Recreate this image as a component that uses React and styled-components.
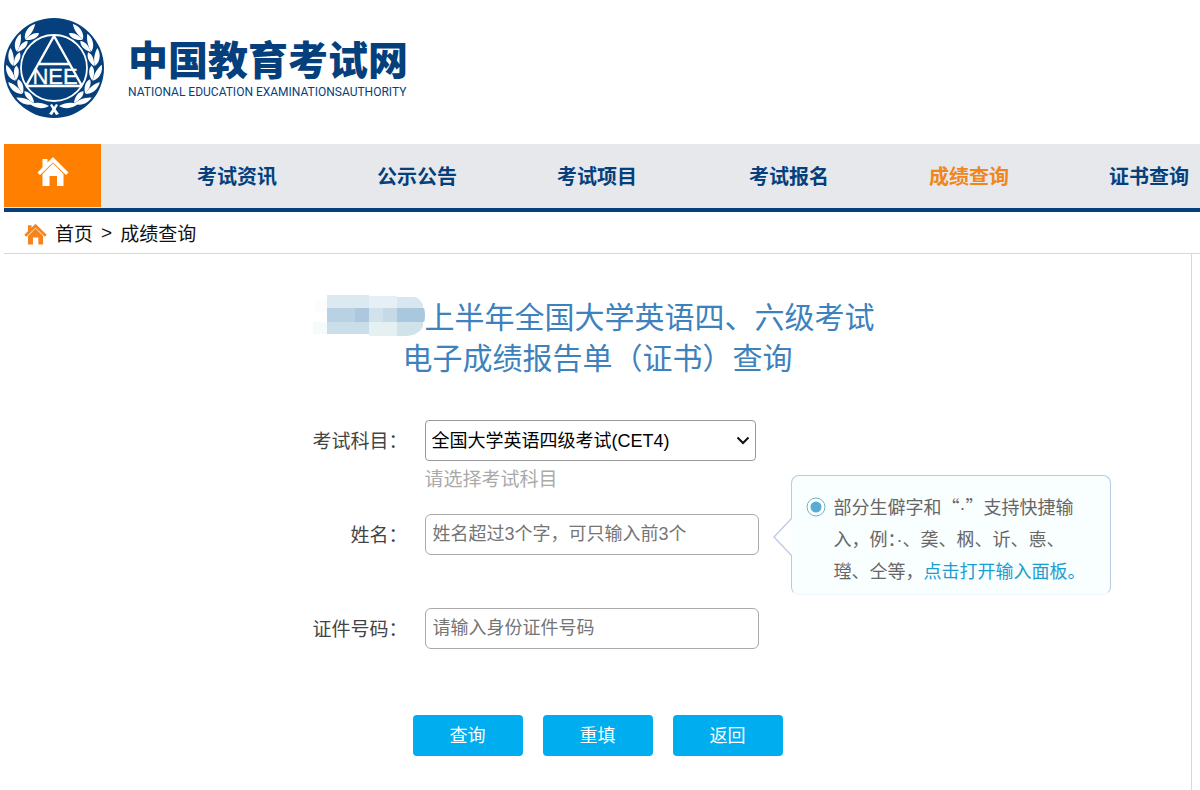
import React, { useState } from 'react';
import styled, { createGlobalStyle } from 'styled-components';

const GlobalStyle = createGlobalStyle`
  * {
    box-sizing: border-box;
  }
  body {
    margin: 0;
    background: #fff;
    color: #444;
    font-family: "Liberation Sans", "Noto Sans CJK SC", sans-serif;
    overflow-x: hidden;
  }
`;

const Page = styled.div`
  padding-left: 4px;
`;

// header
const Header = styled.header`
  display: flex;
  align-items: flex-start;
  gap: 24px;
  height: 144px;
  padding-top: 18px;
`;

const Brand = styled.div`
  display: flex;
  flex-direction: column;
  padding-top: 17px;
  color: #053f7c;
`;

const BrandName = styled.h1`
  margin: 0;
  font-size: 40px;
  line-height: 46px;
  font-weight: 900;
  font-family: "Noto Sans CJK SC", sans-serif;
  white-space: nowrap;
`;

const BrandSub = styled.span`
  font-family: Roboto, "Liberation Sans", sans-serif;
  font-size: 12px;
  line-height: 22px;
  white-space: nowrap;
`;

// navigation
const Nav = styled.nav`
  display: flex;
  height: 68px;
  background: #e6e8ec;
  border-bottom: 4px solid #053f7c;
  overflow: hidden;
`;

const HomeLink = styled.a`
  display: flex;
  flex: none;
  justify-content: center;
  width: 97px;
  height: 63px;
  padding-top: 12px;
  background: #ff8000;
  color: #fff;
`;

const NavGroup = styled.div`
  display: flex;
  flex: none;
  gap: 100px;
  padding-left: ${(props) => props.$space}px;
`;

const NavItem = styled.a`
  flex: none;
  color: ${(props) => (props.$active ? '#f08519' : '#053f7c')};
  font-size: 20px;
  font-weight: 700;
  line-height: 66px;
  text-decoration: none;
`;

const Crumbs = styled.div`
  display: flex;
  align-items: center;
  gap: 8px;
  height: 42px;
  padding-left: 20px;
  border-bottom: 1px solid #d8d8d8;
  color: #111;
  font-size: 19px;

  a {
    color: inherit;
    text-decoration: none;
  }
`;

const CrumbHome = styled.span`
  display: flex;
  padding-top: 4px;
  color: #f5841f;
`;

// content
const Content = styled.main`
  min-height: 536px;
  margin-right: 8px;
  padding-top: 43px;
  border-right: 1px solid #d8d8d8;
`;

const Title = styled.h2`
  margin: 0 0 41px;
  color: #3d81bd;
  font-size: 30px;
  font-weight: 400;
  line-height: 41px;
  text-align: center;
`;

const Mosaic = styled.svg`
  width: 112px;
  height: 41px;
  margin: -2px 0 0 -8px;
  vertical-align: top;
`;

const Fields = styled.div`
  display: grid;
  grid-template-columns: 34% 334px 320px;
  grid-auto-rows: minmax(94px, auto);
  column-gap: 17px;
`;

const Label = styled.label`
  grid-column: 1;
  font-size: 19px;
  line-height: 43px;
  text-align: right;
`;

const Control = styled.div`
  grid-column: 2;
  position: relative;
`;

const Select = styled.select`
  display: block;
  width: 331px;
  height: 41px;
  padding: 0 6px;
  border: 1px solid #999;
  border-radius: 4px;
  background: #fff;
  color: #000;
  font-family: inherit;
  font-size: 18px;
  appearance: none;
`;

const Chevron = styled.svg`
  position: absolute;
  top: 15px;
  right: 9px;
  pointer-events: none;
`;

const Hint = styled.div`
  color: #aaa;
  font-size: 19px;
  line-height: 38px;
`;

const Input = styled.input`
  display: block;
  width: 100%;
  height: 41px;
  padding: 0 7px;
  border: 1px solid #aaa;
  border-radius: 6px;
  background: #fff;
  color: #333;
  font-family: inherit;
  font-size: 18px;

  &::placeholder {
    color: #757575;
  }
`;

const Tip = styled.aside`
  position: relative;
  display: flex;
  grid-column: 3;
  grid-row: 1 / 4;
  align-self: start;
  gap: 8px;
  height: 120px;
  margin: 55px 0 0 15px;
  width: 320px;
  padding: 14px 12px 0 14px;
  border: 1px solid #b7cbe2;
  border-bottom-color: #f0f7fa;
  border-radius: 8px;
  background: #f9feff;
  color: #666;
  font-family: "Noto Sans CJK SC", sans-serif;
  font-size: 18px;
  line-height: 32px;

  p {
    flex: 1;
    margin: 0;
  }
  a {
    color: #1b9dd0;
    text-decoration: none;
  }
`;

// the middle dot is full width in the CJK font
const Dot = styled.span`
  font-family: "Liberation Sans", sans-serif;
  line-height: 1;
`;

const TipArrow = styled.svg`
  position: absolute;
  top: 41px;
  left: -20px;
`;

const TipDot = styled.svg`
  flex: none;
  margin-top: 7px;
`;

const Buttons = styled.div`
  display: flex;
  justify-content: center;
  gap: 20px;
  padding-top: 13px;
`;

const Button = styled.button`
  width: 110px;
  height: 41px;
  padding: 0 0 3px;
  border: 0;
  border-radius: 4px;
  background: #00adef;
  color: #fff;
  font-family: inherit;
  font-size: 18px;
`;

const leaves = [28, 49, 70, 91, 112, 133];

const Emblem = () => (
  <svg width="100" height="101" viewBox="0 0 100 101" role="img" aria-label="NEEA">
    <circle cx="50" cy="50" r="50" fill="#053f7c" />
    <circle cx="50" cy="50" r="33" fill="none" stroke="#fff" strokeWidth="1.8" />
    {/* laurel, one side is the mirror of the other */}
    {[1, -1].map((side) => (
      <g key={side} transform={`translate(50 50) scale(${side} 1)`} fill="#fff">
        {leaves.map((a) => (
          <g key={a} transform={`rotate(${a + 6}) translate(0 -41)`}>
            <path d="M8 1C3 1 -4 -1 -9 -6C-3 -8 5 -6 8 1Z" />
            <path d="M8 1.500C3 6 -3 7 -7 4C-4 0 2 0 8 1.500Z" />
          </g>
        ))}
        <path d="M5 38C12 34 18 34 24 36C19 40 12 42 5 38Z" />
        <path d="M-5 46L2 36L4 37L-2 47Z" />
      </g>
    ))}
    <path d="M50 18L22 68M50 18L78 68M34 46H66M22 68H78" fill="none" stroke="#fff" strokeWidth="2.4" />
    <text x="51" y="66" fill="#fff" stroke="#fff" strokeWidth="0.3" fontFamily="Liberation Sans" fontSize="22" textAnchor="middle">NEE</text>
  </svg>
);

const HouseIcon = ({ size }) => (
  <svg width={size} height={size} viewBox="0 0 32 32" fill="currentColor" aria-hidden="true">
    <path d="M5.500 3H10.500V8L5.500 13Z" />
    <path d="M16 1L0.500 16.500L3 19L16 6.500L29 19L31.500 16.500Z" />
    <path d="M5.500 18L16 7.500L26.500 18V30H20V20H12.500V30H5.500Z" />
  </svg>
);

const leftNav = ['考试资讯', '公示公告', '考试项目'];
const rightNav = ['考试报名', '成绩查询', '证书查询'];

// x, y, width, height, colour of the covered year
const blocks = [
  [2, 5, 12, 12, '#fbfdfd'],
  [0, 27, 14, 12, '#f6fafa'],
  [14, 0, 42, 13, '#dce9f1'],
  [56, 1, 28, 12, '#e5eff5'],
  [84, 2, 26, 11, '#d8e6ef'],
  [14, 13, 28, 14, '#b8d2e4'],
  [42, 13, 14, 14, '#abc8de'],
  [56, 13, 14, 14, '#d2e2ed'],
  [70, 13, 14, 14, '#c5d9e7'],
  [84, 13, 28, 14, '#a9c7dd'],
  [14, 27, 42, 12, '#c9dee9'],
  [56, 27, 28, 14, '#e5f0f3'],
  [84, 27, 26, 14, '#d0e2ea'],
];

export default function App() {
  const [subject, setSubject] = useState('cet4');

  return (
    <>
      <GlobalStyle />
      <Page>
        <Header>
          <Emblem />
          <Brand>
            <BrandName>中国教育考试网</BrandName>
            <BrandSub>NATIONAL EDUCATION EXAMINATIONSAUTHORITY</BrandSub>
          </Brand>
        </Header>
        <Nav>
          <HomeLink href="#" aria-label="首页">
            <HouseIcon size={32} />
          </HomeLink>
          <NavGroup $space={96}>
            {leftNav.map((item) => (
              <NavItem href="#" key={item}>{item}</NavItem>
            ))}
          </NavGroup>
          <NavGroup $space={112}>
            {rightNav.map((item) => (
              <NavItem href="#" key={item} $active={item === '成绩查询'}>{item}</NavItem>
            ))}
          </NavGroup>
        </Nav>
        <Crumbs>
          <CrumbHome>
            <HouseIcon size={23} />
          </CrumbHome>
          <a href="#">首页</a>
          <span>&gt;</span>
          <a href="#">成绩查询</a>
        </Crumbs>
        <Content>
          <Title>
            <Mosaic viewBox="0 0 112 41" aria-hidden="true">
              <clipPath id="cover">
                <path d="M0 0H96C107 1 112 10 112 20C112 32 107 40 94 41H0Z" />
              </clipPath>
              <g clipPath="url(#cover)">
                {blocks.map(([x, y, w, h, fill]) => (
                  <rect key={`${x}-${y}`} x={x} y={y} width={w} height={h} fill={fill} />
                ))}
              </g>
            </Mosaic>
            上半年全国大学英语四、六级考试
            <br />
            电子成绩报告单（证书）查询
          </Title>
          <form onSubmit={(e) => e.preventDefault()}>
            <Fields>
              <Label htmlFor="subject">考试科目：</Label>
              <Control>
                <Select id="subject" value={subject} onChange={(e) => setSubject(e.target.value)}>
                  <option value="cet4">全国大学英语四级考试(CET4)</option>
                  <option value="cet6">全国大学英语六级考试(CET6)</option>
                </Select>
                <Chevron width="14" height="11" viewBox="0 0 14 11" aria-hidden="true">
                  <path d="M1.500 2.500L7 8L12.500 2.500" fill="none" stroke="#111" strokeWidth="2" />
                </Chevron>
                <Hint>请选择考试科目</Hint>
              </Control>
              <Label htmlFor="name">姓名：</Label>
              <Control>
                <Input id="name" placeholder="姓名超过3个字，可只输入前3个" />
              </Control>
              <Label htmlFor="idcard">证件号码：</Label>
              <Control>
                <Input id="idcard" placeholder="请输入身份证件号码" />
              </Control>
              <Tip>
                <TipArrow width="20" height="40" viewBox="0 0 20 40" aria-hidden="true">
                  <path d="M20 1L2 20L20 39" fill="#fff" stroke="#c0cde6" strokeWidth="1.500" />
                </TipArrow>
                <TipDot width="20" height="20" viewBox="0 0 20 20" aria-hidden="true">
                  <circle cx="10" cy="10" r="9" fill="#fff" stroke="#6fb4c8" />
                  <circle cx="10" cy="10" r="5.500" fill="#58acd3" />
                </TipDot>
                <p>
                  部分生僻字和“<Dot>·</Dot>”支持快捷输入，例：<Dot>·</Dot>、䶮、㭎、䜣、㥁、㼆、仝等，
                  <a href="#">点击打开输入面板。</a>
                </p>
              </Tip>
            </Fields>
            <Buttons>
              <Button type="submit">查询</Button>
              <Button type="reset">重填</Button>
              <Button type="button">返回</Button>
            </Buttons>
          </form>
        </Content>
      </Page>
    </>
  );
}
